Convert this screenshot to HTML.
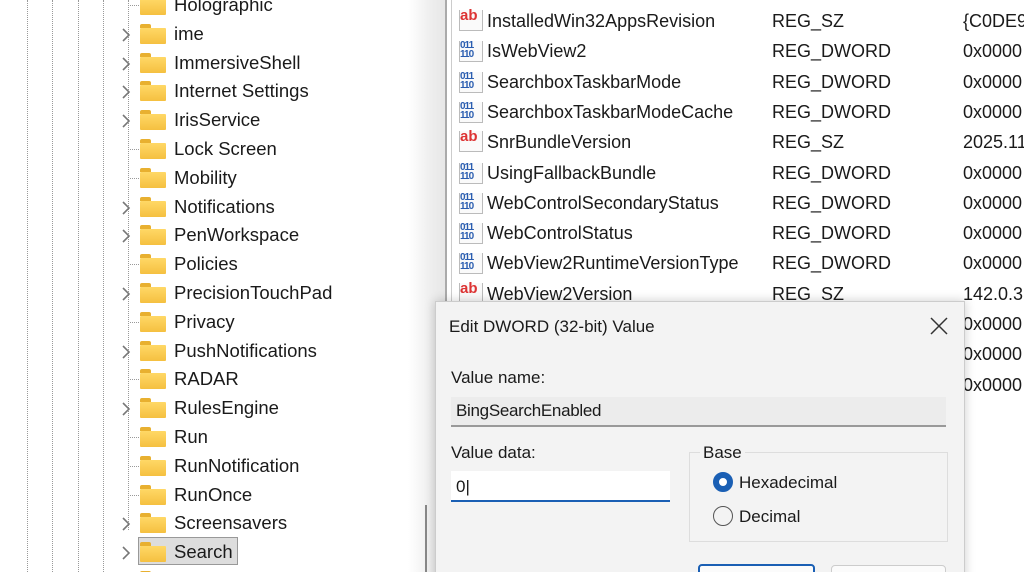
<!DOCTYPE html><html><head><style>
html,body{margin:0;width:1024px;height:572px;overflow:hidden}
body{background:#fff;font-family:"Liberation Sans",sans-serif;color:#1a1a1a;position:relative}
.a{position:absolute}
.dv{position:absolute;top:0;height:572px;border-left:1px dotted #999}
.t{position:absolute;left:174px;font-size:18.5px;line-height:22px}
.f{position:absolute;left:140px;width:26px;height:20px}
.ch{position:absolute;left:121px;width:10px;height:14px}
.r{position:absolute;font-size:18px;line-height:22px;white-space:nowrap}
.ic{position:absolute;left:459px;width:22px;height:20px;font-size:12px;font-weight:bold;line-height:12px}
</style></head><body>
<div class="dv" style="left:27px"></div><div class="dv" style="left:52px"></div><div class="dv" style="left:78px"></div><div class="dv" style="left:103px"></div><div class="dv" style="left:128px;height:530px"></div>
<div class="a" style="left:408px;top:0;width:38px;height:572px;background:linear-gradient(90deg,#fff,#eee 60%,#e6e6e6)"></div>
<div class="a" style="left:425px;top:505px;width:2px;height:67px;background:#888"></div>
<div class="a" style="left:445px;top:0;width:2px;height:310px;background:#aaa"></div>
<div class="a" style="left:451px;top:0;width:1px;height:310px;background:#ccc"></div>
<div class="a" style="left:138px;top:537px;width:98px;height:26px;background:#ddd;border:1px solid #999"></div>
<div id="tree"></div>
<div id="list"></div>
<script>
var n=["Holographic","ime","ImmersiveShell","Internet Settings","IrisService","Lock Screen","Mobility","Notifications","PenWorkspace","Policies","PrecisionTouchPad","Privacy","PushNotifications","RADAR","RulesEngine","Run","RunNotification","RunOnce","Screensavers","Search","SearchSettings"];
var ex=[0,1,1,1,1,0,0,1,1,0,1,0,1,0,1,0,0,0,1,1,0];var h="";
n.forEach(function(s,i){var y=-6+i*28.8;
h+='<div class="f" style="top:'+(y+1)+'px"><div style="width:11px;height:4px;background:#e8b030;border-radius:2px 2px 0 0"></div><div style="height:16px;background:linear-gradient(#ffd866,#f5c040);border-radius:1px"></div></div>';
h+='<div class="t" style="top:'+y+'px">'+s+'</div>';
if(ex[i])h+='<svg class="ch" style="top:'+(y+5)+'px" viewBox="0 0 10 14"><polyline points="2,1 8,7 2,13" fill="none" stroke="#777" stroke-width="1.6"/></svg>';else h+='<div class="a" style="left:130px;top:'+(y+11)+'px;width:9px;border-top:1px dotted #999"></div>';});
document.getElementById("tree").innerHTML=h;
var L=[["ab","InstalledWin32AppsRevision","REG_SZ","{C0DE9"],["b","IsWebView2","REG_DWORD","0x0000"],["b","SearchboxTaskbarMode","REG_DWORD","0x0000"],["b","SearchboxTaskbarModeCache","REG_DWORD","0x0000"],["ab","SnrBundleVersion","REG_SZ","2025.11"],["b","UsingFallbackBundle","REG_DWORD","0x0000"],["b","WebControlSecondaryStatus","REG_DWORD","0x0000"],["b","WebControlStatus","REG_DWORD","0x0000"],["b","WebView2RuntimeVersionType","REG_DWORD","0x0000"],["ab","WebView2Version","REG_SZ","142.0.3"],["","","","0x0000"],["","","","0x0000"],["","","","0x0000"]];
h="";L.forEach(function(r,i){var y=10+i*30.3;
if(r[0]=="ab")h+='<div class="ic" style="top:'+(y)+'px;color:#d33;font-size:15px;border:1px solid #bbb;border-top:none;background:#fafafa">ab</div>';
else if(r[0])h+='<div class="ic" style="top:'+(y+1)+'px;color:#2a5db0;font-size:10px;line-height:9px;letter-spacing:-1px;border:1px solid #bbb;border-top:none;background:#fafafa">011<br>110</div>';
h+='<div class="r" style="left:487px;top:'+y+'px">'+r[1]+'</div><div class="r" style="left:772px;top:'+y+'px">'+r[2]+'</div><div class="r" style="left:963px;top:'+y+'px">'+r[3]+'</div>';});
document.getElementById("list").innerHTML=h;
</script>
<div class="a" style="left:435px;top:301px;width:528px;height:290px;background:#f3f3f3;border:1px solid #ccc;box-shadow:0 0 10px rgba(0,0,0,.2)">
<div class="r" style="left:13px;top:14px;font-size:17px">Edit DWORD (32-bit) Value</div>
<svg class="a" style="left:494px;top:15px" width="18" height="18" viewBox="0 0 18 18"><path d="M1 1L17 17M17 1L1 17" stroke="#333" stroke-width="1.5"/></svg>
<div class="r" style="left:15px;top:65px;font-size:17px">Value name:</div>
<div class="a" style="left:15px;top:95px;width:495px;height:28px;background:#ececec;border-bottom:2px solid #999"></div>
<div class="r" style="left:20px;top:98px;font-size:17px;letter-spacing:-.3px">BingSearchEnabled</div>
<div class="r" style="left:15px;top:140px;font-size:17px">Value data:</div>
<div class="a" style="left:15px;top:169px;width:219px;height:29px;background:#fff;border-bottom:2px solid #1a5fb4"></div>
<div class="r" style="left:20px;top:174px;font-size:17px">0|</div>
<div class="a" style="left:253px;top:150px;width:257px;height:88px;border:1px solid #ddd"></div>
<div class="r" style="left:264px;top:140px;font-size:17px;background:#f3f3f3;padding:0 3px">Base</div>
<div class="a" style="left:277px;top:170px;width:8px;height:8px;border:6px solid #1a5fb4;border-radius:50%;background:#fff"></div>
<div class="r" style="left:303px;top:170px;font-size:17px">Hexadecimal</div>
<div class="a" style="left:277px;top:204px;width:18px;height:18px;border:1px solid #555;border-radius:50%"></div>
<div class="r" style="left:303px;top:204px;font-size:17px">Decimal</div>
<div class="a" style="left:262px;top:262px;width:113px;height:30px;border:2px solid #1a5fb4;border-radius:4px;background:#fbfbfb"></div>
<div class="a" style="left:395px;top:263px;width:113px;height:30px;border:1px solid #ccc;border-radius:4px;background:#fbfbfb"></div>
</div>
</body></html>
